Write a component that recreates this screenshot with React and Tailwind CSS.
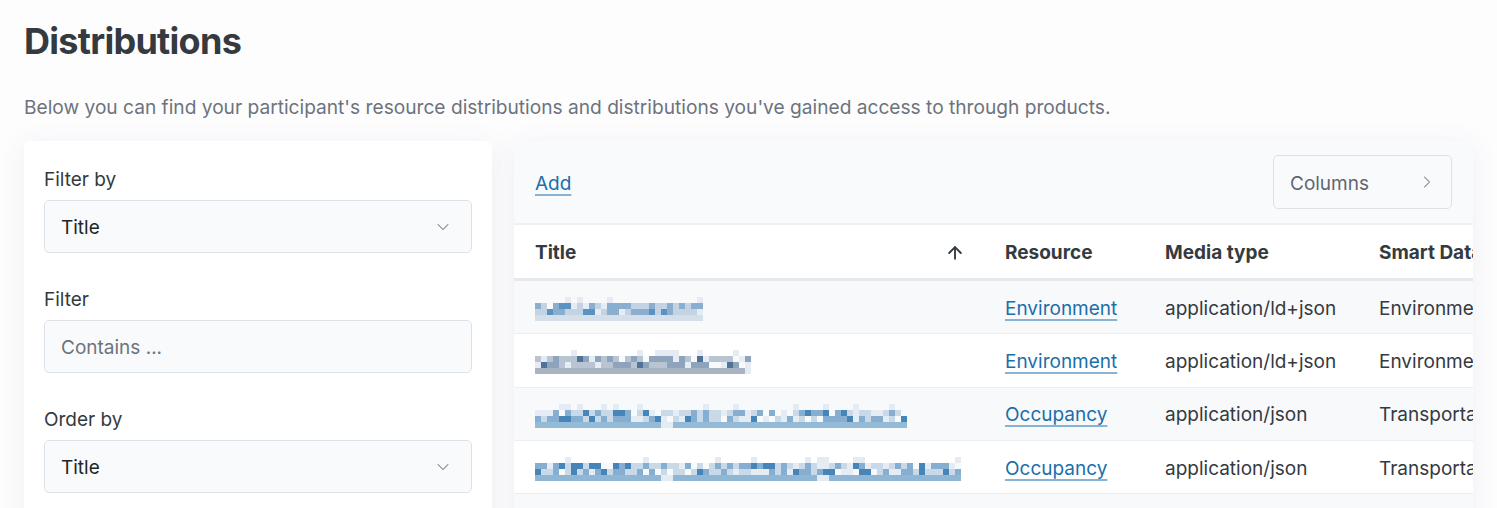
import React from "react";
import { ChevronDown, ChevronRight, ArrowUp } from "lucide-react";

function rng(seed) {
  let s = seed;
  return () => {
    s = (s * 1103515245 + 12345) % 2147483648;
    return s / 2147483648;
  };
}

function Mosaic({ cells, seed, dark, mid, light, under, underBreaks = [] }) {
  const r = rng(seed);
  const rects = [];
  for (let i = 0; i < cells; i++) {
    if (r() < 0.2) rects.push(<rect key={"a" + i} x={i * 6} y={0} width={6} height={6} fill="#e4ebf3" />);
    for (let row = 1; row <= 2; row++) {
      const v = r();
      const fill = v < 0.12 ? dark : v < 0.4 ? mid : v < 0.75 ? light : v < 0.9 ? "#e6ecf3" : "#f7f9fb";
      rects.push(<rect key={"r" + row + "-" + i} x={i * 6} y={row * 6} width={6} height={6} fill={fill} />);
    }
    const broken = underBreaks.includes(i);
    rects.push(<rect key={"u" + i} x={i * 6} y={18} width={6} height={6} fill={broken ? "#e3ebf3" : under} />);
  }
  return (
    <svg width={cells * 6} height={24} viewBox={`0 0 ${cells * 6} 24`} className="block">
      {rects}
    </svg>
  );
}

const rows = [
  { m: { cells: 28, seed: 7, dark: "#5a92c2", mid: "#89aed0", light: "#c3d3e3", under: "#d4dfea" }, res: "Environment", media: "application/ld+json", smart: "Environment" },
  { m: { cells: 36, seed: 19, dark: "#4f7398", mid: "#8ea4bc", light: "#b8c4d1", under: "#a9b4c3", underBreaks: [35] }, res: "Environment", media: "application/ld+json", smart: "Environment" },
  { m: { cells: 62, seed: 31, dark: "#4585ba", mid: "#86aed0", light: "#cad9e7", under: "#93bad6", underBreaks: [21, 22] }, res: "Occupancy", media: "application/json", smart: "Transportation" },
  { m: { cells: 71, seed: 53, dark: "#4585ba", mid: "#86aed0", light: "#cad9e7", under: "#8fb6d5", underBreaks: [21, 22, 47, 48] }, res: "Occupancy", media: "application/json", smart: "Transportation" },
];

function Field({ label, children }) {
  return (
    <div>
      <div className="mb-[7px] text-[19px] leading-[27px] text-[#343a40]">{label}</div>
      {children}
    </div>
  );
}

function Select({ value }) {
  return (
    <div className="flex h-[53px] items-center justify-between rounded-[5px] border border-[#dde1e8] bg-[#f9fafb] pl-4 pr-[18px]">
      <span className="pt-1 text-[19px] text-[#212529]">{value}</span>
      <ChevronDown size={20} strokeWidth={1.25} className="text-[#737b88]" />
    </div>
  );
}

export default function App() {
  return (
    <div className="min-h-screen bg-[#fdfdfe] px-6 font-['Inter',sans-serif] text-[#343a40]">
      <h1 className="pt-[19px] text-[36px] font-bold leading-[44px] tracking-[-0.02em] text-[#343a40]">Distributions</h1>
      <p className="mt-[30px] text-[19.15px] leading-[28px] text-[#6c737d]">
        Below you can find your participant's resource distributions and distributions you've gained access to through products.
      </p>
      <div className="mt-[20px] flex gap-[22px]">
        <div className="w-[468px] shrink-0 rounded-md bg-white px-5 pt-[25px] pb-6 shadow-[0_4px_28px_rgba(70,80,120,0.08)]">
          <div className="flex flex-col gap-[33px]">
            <Field label="Filter by">
              <Select value="Title" />
            </Field>
            <Field label="Filter">
              <div className="flex h-[53px] items-center rounded-[5px] border border-[#dde1e8] bg-[#f9fafb] pl-4">
                <span className="pt-1 text-[19px] text-[#6c737d]">Contains ...</span>
              </div>
            </Field>
            <Field label="Order by">
              <Select value="Title" />
            </Field>
          </div>
        </div>
        <div className="min-w-0 flex-1 overflow-hidden rounded-md bg-white shadow-[0_4px_28px_rgba(70,80,120,0.08)]">
          <div className="flex h-[84px] items-center justify-between border-b-2 border-[#eef0f4] bg-[#f9fafb] pl-[21px] pr-[21px]">
            <a className="pt-1 text-[19px] text-[#1a6fab] underline decoration-[#86b3d6] decoration-2 underline-offset-4">Add</a>
            <div className="flex h-[54px] w-[179px] items-center justify-between rounded-[5px] border border-[#dde1e8] bg-[#f9fafb] pl-4 pr-[14px]">
              <span className="pt-1 text-[19px] text-[#5f6672]">Columns</span>
              <ChevronRight size={20} strokeWidth={1.25} className="text-[#737b88]" />
            </div>
          </div>
          <div className="flex h-[56px] items-center whitespace-nowrap border-b-[3px] border-[#e6e8ec] bg-white text-[19px] font-bold text-[#343a40]">
            <div className="flex w-[470px] shrink-0 items-center justify-between pl-[21px] pr-[19px]">
              <span className="pt-1">Title</span>
              <ArrowUp size={20} strokeWidth={2.25} className="mt-[2px] text-[#343a40]" />
            </div>
            <div className="w-[160px] shrink-0 pl-[21px] pt-1">Resource</div>
            <div className="w-[214px] shrink-0 pl-[21px] pt-1">Media type</div>
            <div className="shrink-0 pl-[21px] pt-1">Smart Data Model</div>
          </div>
          {rows.map((row, i) => (
            <div
              key={i}
              className={
                "flex h-[53.3px] items-center whitespace-nowrap border-b border-[#eceef2] pt-1 text-[19px] text-[#343a40] " +
                (i % 2 === 0 ? "bg-[#f8f9fa]" : "bg-white")
              }
            >
              <div className="w-[470px] shrink-0 pl-[21px]">
                <Mosaic {...row.m} />
              </div>
              <div className="w-[160px] shrink-0 pl-[21px]">
                <a className="text-[#1a6fab] underline decoration-[#86b3d6] decoration-2 underline-offset-4">{row.res}</a>
              </div>
              <div className="w-[214px] shrink-0 pl-[21px]">{row.media}</div>
              <div className="shrink-0 pl-[21px]">{row.smart}</div>
            </div>
          ))}
          <div className="h-[53px] bg-[#f8f9fa]" />
        </div>
      </div>
    </div>
  );
}
